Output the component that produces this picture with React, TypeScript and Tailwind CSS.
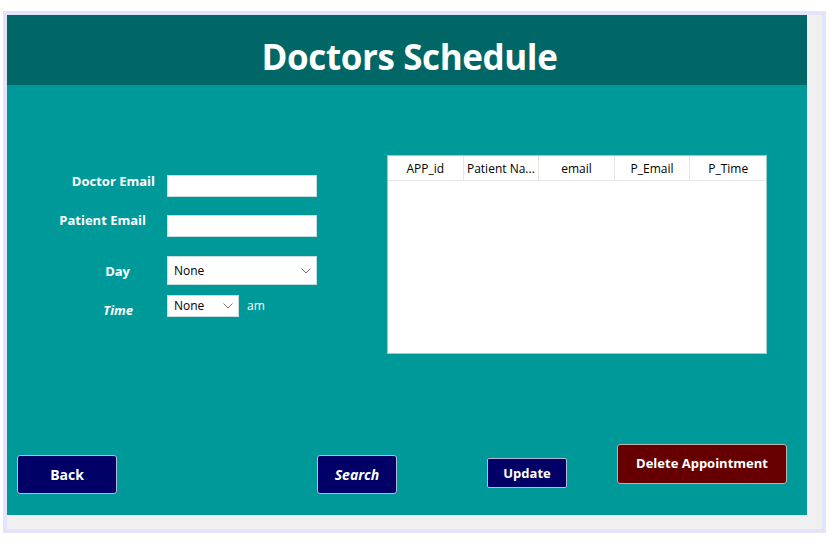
import React from 'react';

const font = { fontFamily: '"Open Sans", "Noto Sans", Arial, sans-serif' };

const Chevron: React.FC = () => (
  <svg width="10" height="6" viewBox="0 0 10 6" className="shrink-0">
    <polyline points="0.5,0.5 5,5 9.5,0.5" fill="none" stroke="#707070" strokeWidth="1" />
  </svg>
);

const columns = ['APP_id', 'Patient Na...', 'email', 'P_Email', 'P_Time'];

export default function App() {
  return (
    <div className="w-full h-[542px] bg-white pt-[11px] pl-[3px]" style={font}>
      <div className="w-[823px] h-[522px] border-4 border-[#e3e3f9] bg-[#f0f0f0]">
        <div className="w-[800px] h-[500px] flex flex-col">
          {/* header */}
          <div className="h-[70px] bg-[#006666] flex items-center justify-center pl-[5px]">
            <h1 className="text-white font-bold text-[35px] leading-none pt-[12px] tracking-[-0.4px]">Doctors Schedule</h1>
          </div>

          {/* body */}
          <div className="flex-1 bg-[#009999] flex flex-col">
            <div className="flex items-start pt-[70px]">
              {/* form */}
              <div className="flex flex-col mt-[20px] w-[310px]">
                <div className="flex items-center h-[22px]">
                  <label className="w-[160px] text-right pr-[12px] mb-[8px] text-white font-bold text-[13px]">Doctor Email</label>
                  <div className="w-[150px] h-[22px] bg-white border border-[#c8dede]" />
                </div>
                <div className="flex items-center h-[22px] mt-[18px]">
                  <label className="w-[160px] text-right pr-[21px] mb-[10px] text-white font-bold text-[13px]">Patient Email</label>
                  <div className="w-[150px] h-[22px] bg-white border border-[#c8dede]" />
                </div>
                <div className="flex items-center h-[29px] mt-[19px]">
                  <label className="w-[160px] text-right pr-[37px] mt-[2px] text-white font-bold text-[13px]">Day</label>
                  <div className="w-[150px] h-[29px] bg-white border border-[#c8dede] flex items-center justify-between pl-[6px] pr-[5px]">
                    <span className="text-[12px] text-black">None</span>
                    <Chevron />
                  </div>
                </div>
                <div className="flex items-center h-[22px] mt-[10px]">
                  <label className="w-[160px] text-right pr-[34px] mt-[10px] text-white font-bold italic text-[13px]">Time</label>
                  <div className="w-[72px] h-[22px] bg-white border border-[#c8dede] flex items-center justify-between pl-[6px] pr-[5px]">
                    <span className="text-[12px] text-black">None</span>
                    <Chevron />
                  </div>
                  <span className="ml-[8px] text-white text-[12px]">am</span>
                </div>
              </div>

              {/* table */}
              <div className="ml-[70px] w-[380px] h-[199px] bg-white border border-[#9ccccc]">
                <div className="flex h-[25px] border-b border-[#e6e6e6]">
                  {columns.map((c, i) => (
                    <div
                      key={c}
                      className={`w-[76px] flex items-center justify-center pt-[2px] text-[12px] text-black ${i < columns.length - 1 ? 'border-r border-[#e6e6e6]' : ''}`}
                    >
                      {c}
                    </div>
                  ))}
                </div>
              </div>
            </div>

            {/* buttons */}
            <div className="mt-auto flex items-end pl-[10px] pb-[21px]">
              <button className="w-[100px] h-[39px] bg-[#000066] border border-[#b8b8d8] rounded-[3px] text-white font-bold text-[14px]">Back</button>
              <button className="ml-[200px] w-[80px] h-[39px] bg-[#000066] border border-[#b8b8d8] rounded-[3px] text-white font-bold italic text-[14px]">Search</button>
              <button className="ml-[90px] mb-[6px] w-[80px] h-[30px] pt-[2px] bg-[#000066] border border-[#b8b8d8] rounded-[2px] text-white font-bold text-[13px]">Update</button>
              <button className="ml-[50px] mb-[10px] w-[170px] h-[40px] bg-[#660000] border border-[#c0b0b0] rounded-[3px] text-white font-bold text-[13px]">Delete Appointment</button>
            </div>
          </div>
        </div>
      </div>
    </div>
  );
}
